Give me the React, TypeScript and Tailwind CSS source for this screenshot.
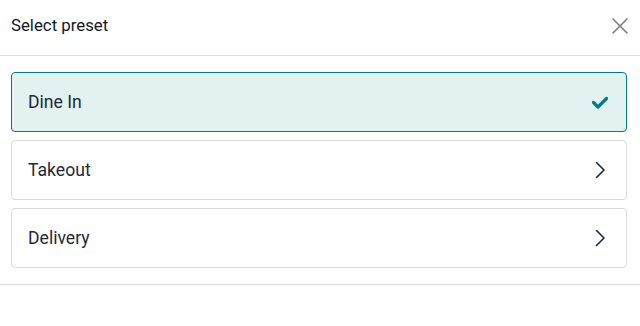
import React, { useState } from 'react';

const presets = ['Dine In', 'Takeout', 'Delivery'];

const CheckIcon = () => (
    <svg width="16" height="13" viewBox="0 0 16 13" fill="none">
        <path d="M1.5 6.5 L6 11 L14.5 2.5" stroke="#017e84" strokeWidth="3.2" strokeLinecap="round" strokeLinejoin="round" />
    </svg>
);

const ChevronIcon = () => (
    <svg width="12" height="18" viewBox="0 0 12 18" fill="none">
        <path d="M2.5 1.5 L10 9 L2.5 16.5" stroke="#1f2937" strokeWidth="1.6" strokeLinecap="round" strokeLinejoin="round" />
    </svg>
);

const CloseIcon = () => (
    <svg width="16" height="16" viewBox="0 0 16 16" fill="none">
        <path d="M1 1 L15 15 M15 1 L1 15" stroke="#7f7f7f" strokeWidth="1.6" strokeLinecap="round" />
    </svg>
);

const App: React.FC = () => {
    const [selected, setSelected] = useState('Dine In');

    return (
        <div className="w-[640px] h-[326px] bg-white text-[#212529]" style={{ fontFamily: 'Roboto, "Noto Sans", sans-serif' }}>
            <div className="h-[56px] flex items-center justify-between pl-[11px] pr-[12px] pb-[3px] border-b border-[#dcdcdc]">
                <h2 className="text-[16.8px] text-[#111827]">Select preset</h2>
                <button className="w-[16px] h-[16px] flex items-center justify-center">
                    <CloseIcon />
                </button>
            </div>

            <div className="flex flex-col gap-2 pt-4 pb-4 pl-[11px] pr-[13px] border-b border-[#dcdcdc]">
                {presets.map(name => {
                    const active = name === selected;
                    return (
                        <button
                            key={name}
                            onClick={() => setSelected(name)}
                            className={
                                active
                                    ? 'h-[60px] flex items-center justify-between pl-4 pr-[18px] rounded-[4px] border border-[#017e84] bg-[#e3f1f1] text-left'
                                    : 'h-[60px] flex items-center justify-between pl-4 pr-[20px] rounded-[4px] border border-[#d8dadd] bg-white text-left'
                            }
                        >
                            <span className="text-[17.6px] text-[#1f2937]">{name}</span>
                            {active ? <CheckIcon /> : <ChevronIcon />}
                        </button>
                    );
                })}
            </div>
        </div>
    );
};

export default App;
